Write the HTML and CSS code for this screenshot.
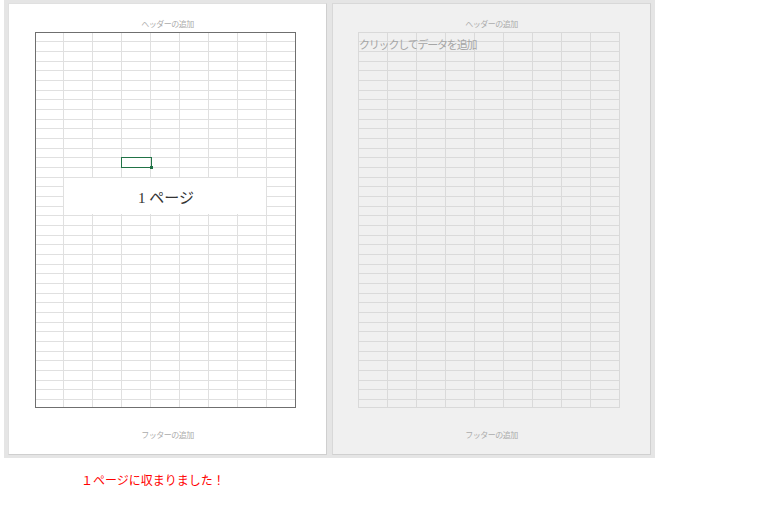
FILE: index.html
```html
<!DOCTYPE html>
<html lang="ja">
<head>
<meta charset="utf-8">
<title>ページレイアウト</title>
<link rel="stylesheet" href="styles.css">
</head>
<body>
<div class="layout-view">
  <section class="page">
    <div class="page-header">ヘッダーの追加</div>
    <div class="sheet sheet--active">
      <div class="cell-cursor"><span class="fill-handle"></span></div>
      <div class="page-mark">1 ページ</div>
    </div>
    <div class="page-footer">フッターの追加</div>
  </section>
  <section class="page page--blank">
    <div class="page-header">ヘッダーの追加</div>
    <div class="sheet sheet--blank">
      <div class="add-data">クリックしてデータを追加</div>
    </div>
    <div class="page-footer">フッターの追加</div>
  </section>
</div>
<p class="fit-message">１ページに収まりました！</p>
</body>
</html>
```

FILE: styles.css
```css
html, body {
  margin: 0;
  padding: 0;
  background: #ffffff;
}

body {
  font-family: "Noto Sans CJK JP", "Noto Sans", sans-serif;
}

.layout-view {
  display: flex;
  gap: 5px;
  width: 651px;
  box-sizing: border-box;
  margin-left: 4px;
  padding: 3px 4px;
  background: #e5e5e5;
}

.page {
  display: flex;
  flex-direction: column;
  width: 319px;
  height: 452px;
  box-sizing: border-box;
  border: 1px solid;
  border-color: #e0e0e0 #cfcfcf #cfcfcf #e0e0e0;
  background: #ffffff;
}

.page--blank {
  background: #f0f0f0;
  border-color: #d8d8d8 #d0d0d0 #d0d0d0 #d8d8d8;
}

.page-header,
.page-footer {
  font-size: 8px;
  line-height: 10px;
  letter-spacing: -0.5px;
  text-align: center;
  color: #acacac;
  white-space: nowrap;
}

.page-header {
  height: 28px;
  box-sizing: border-box;
  padding-top: 15px;
}

.page-footer {
  padding-top: 22px;
}

.sheet {
  position: relative;
  height: 376px;
  box-sizing: border-box;
  border: 1px solid #6f6f6f;
  background-image:
    linear-gradient(to right, #e0e0e0 0 1px, transparent 1px),
    linear-gradient(to bottom,
      #e0e0e0 0 1px, transparent 1px 10px,
      #e0e0e0 10px 11px, transparent 11px 20px,
      #e0e0e0 20px 21px, transparent 21px);
  background-size: 29px 100%, 100% 29px;
  background-clip: padding-box;
}

.sheet--active {
  width: 261px;
  margin-left: 26px;
  background-position: 27px 0, 0 8px;
}

.sheet--blank {
  width: 262px;
  margin-left: 25px;
  border-color: #d9d9d9;
  background-image:
    linear-gradient(to right, #dadada 0 1px, transparent 1px),
    linear-gradient(to bottom,
      #dadada 0 1px, transparent 1px 10px,
      #dadada 10px 11px, transparent 11px 20px,
      #dadada 20px 21px, transparent 21px);
  background-position: 28px 0, 0 8px;
}

.cell-cursor {
  position: absolute;
  left: 85px;
  top: 124px;
  width: 31px;
  height: 11px;
  box-sizing: border-box;
  border: 1px solid #217346;
}

.fill-handle {
  position: absolute;
  right: -2px;
  bottom: -2px;
  width: 3px;
  height: 3px;
  background: #217346;
}

.page-mark {
  position: absolute;
  left: 28px;
  top: 145px;
  width: 202px;
  height: 36px;
  display: flex;
  align-items: center;
  justify-content: center;
  padding-left: 2px;
  box-sizing: border-box;
  background: #ffffff;
  font-family: "Liberation Serif", "Noto Sans CJK JP", serif;
  font-size: 15px;
  color: #333333;
  white-space: nowrap;
}

.add-data {
  position: absolute;
  left: 0;
  top: 4px;
  font-size: 11px;
  line-height: 14px;
  letter-spacing: -1.2px;
  color: #a6a6a6;
  white-space: nowrap;
}

.fit-message {
  margin: 15px 0 0 81px;
  font-size: 12px;
  line-height: 14px;
  color: #ff0000;
  white-space: nowrap;
}
```
